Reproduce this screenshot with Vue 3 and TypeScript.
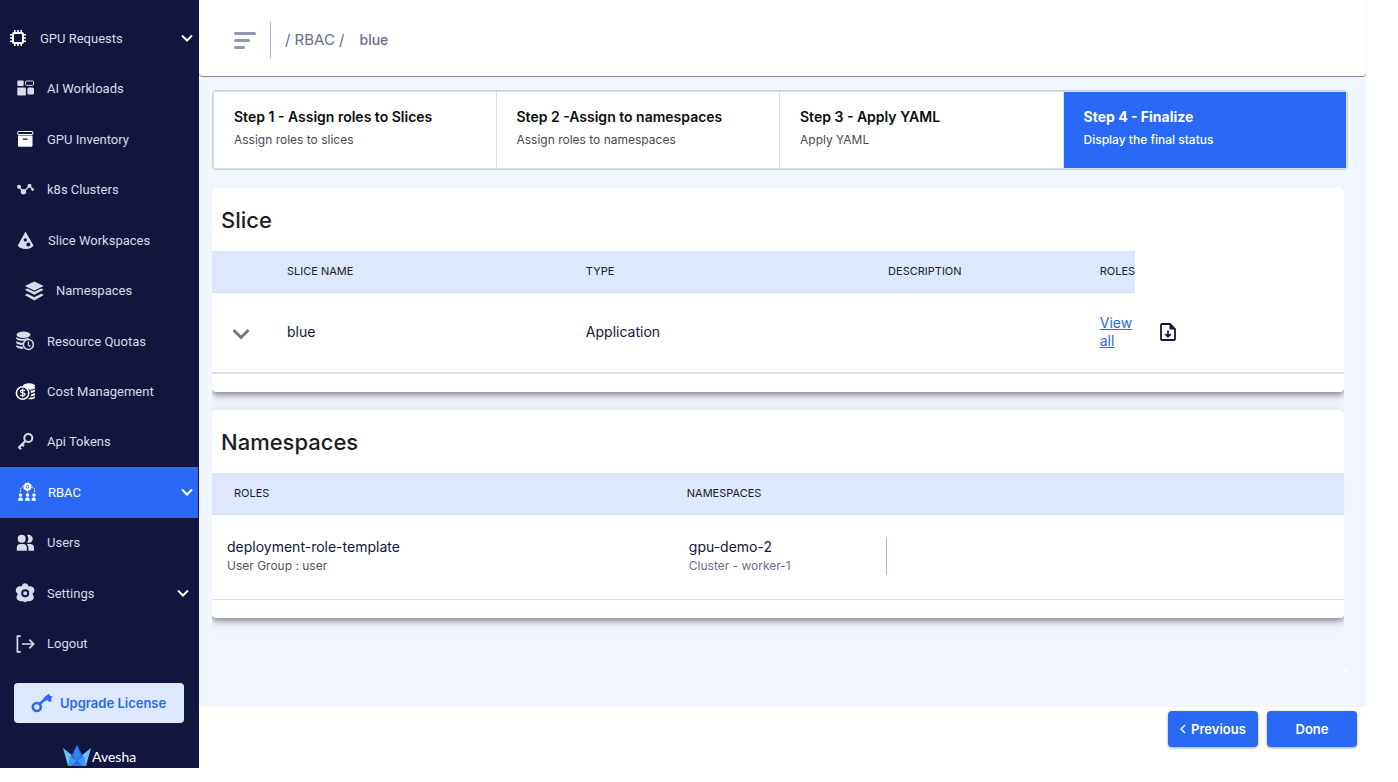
<script setup lang="ts">
import { ref } from 'vue'

interface NavItem {
  label: string
  icon: string
  place: 'root' | 'child' | 'offset' | 'nested'
  expandable?: boolean
}

interface Step {
  title: string
  hint: string
}

const navItems: NavItem[] = [
  { label: 'GPU Requests', icon: 'chip', place: 'root', expandable: true },
  { label: 'AI Workloads', icon: 'workloads', place: 'child' },
  { label: 'GPU Inventory', icon: 'archive', place: 'child' },
  { label: 'k8s Clusters', icon: 'clusters', place: 'child' },
  { label: 'Slice Workspaces', icon: 'slice', place: 'offset' },
  { label: 'Namespaces', icon: 'layers', place: 'nested' },
  { label: 'Resource Quotas', icon: 'quota', place: 'child' },
  { label: 'Cost Management', icon: 'cost', place: 'child' },
  { label: 'Api Tokens', icon: 'key', place: 'child' },
  { label: 'RBAC', icon: 'rbac', place: 'offset', expandable: true },
  { label: 'Users', icon: 'users', place: 'child' },
  { label: 'Settings', icon: 'settings', place: 'child', expandable: true },
  { label: 'Logout', icon: 'logout', place: 'child' },
]

const steps: Step[] = [
  { title: 'Step 1 - Assign roles to Slices', hint: 'Assign roles to slices' },
  { title: 'Step 2 -Assign to namespaces', hint: 'Assign roles to namespaces' },
  { title: 'Step 3 - Apply YAML', hint: 'Apply YAML' },
  { title: 'Step 4 - Finalize', hint: 'Display the final status' },
]

const slices = [{ name: 'blue', type: 'Application', description: '' }]
const roles = [
  { name: 'deployment-role-template', group: 'User Group : user', namespace: 'gpu-demo-2', cluster: 'Cluster - worker-1' },
]

const activeNav = ref('RBAC')
const activeStep = ref(3)
</script>

<template>
  <div class="page">
    <aside class="sidebar">
      <nav class="nav" aria-label="Main">
        <a
          v-for="item in navItems"
          :key="item.label"
          href="#"
          class="nav-item"
          :class="[item.place, { active: item.label === activeNav }]"
          @click.prevent="activeNav = item.label"
        >
          <svg class="nav-icon" viewBox="0 0 20 20" aria-hidden="true">
            <g v-if="item.icon === 'chip'" class="bright">
              <path fill-rule="evenodd" d="M6 4h8a2 2 0 0 1 2 2v8a2 2 0 0 1-2 2H6a2 2 0 0 1-2-2V6a2 2 0 0 1 2-2zm0 2v8h8V6z" />
              <path d="M6 2h1.6v2.4H6zM9.200 2h1.600v2.400H9.200zM12.400 2H14v2.400h-1.600zM6 15.600h1.600V18H6zM9.200 15.600h1.600V18H9.200zM12.400 15.600H14V18h-1.600zM2 6h2.400v1.600H2zM2 9.200h2.400v1.600H2zM2 12.400h2.400V14H2zM15.600 6H18v1.600h-2.400zM15.600 9.200H18v1.600h-2.400zM15.600 12.400H18V14h-2.400z" />
            </g>
            <g v-else-if="item.icon === 'workloads'">
              <rect x="2.300" y="1.500" width="6.400" height="5.500" rx="1" />
              <rect x="10.600" y="2" width="7.900" height="4.400" rx=".8" fill="none" stroke="currentColor" />
              <rect x="2.300" y="8.500" width="8.600" height="8" rx="1" />
              <rect x="12.400" y="8.500" width="6.600" height="7" rx="1.500" />
            </g>
            <g v-else-if="item.icon === 'archive'" class="bright">
              <rect x="2.800" y="2.500" width="15" height="3" rx=".5" fill="none" stroke="currentColor" />
              <path fill-rule="evenodd" d="M3 6.500h14.500v10a1.300 1.300 0 0 1-1.300 1.300H4.300A1.300 1.300 0 0 1 3 16.500zM7.800 9.600v1.200h4.800V9.600z" />
            </g>
            <g v-else-if="item.icon === 'clusters'">
              <path d="M4 7l4.500 5 6-6 3.500 3.500" fill="none" stroke="currentColor" stroke-width="1.300" />
              <circle cx="4" cy="6.800" r="2" />
              <circle cx="8.500" cy="11.800" r="2.700" />
              <circle cx="14.500" cy="5.700" r="2" />
              <circle cx="17.600" cy="9.500" r="1.400" />
            </g>
            <path
              v-else-if="item.icon === 'slice'"
              fill-rule="evenodd"
              d="M9.500 1.500L1.800 15.500c1 2.200 4.300 3.600 7.800 3.600s6.900-1.400 7.900-3.600zM9.300 8.200a1.700 1.700 0 1 1 0 3.400 1.700 1.700 0 0 1 0-3.400zM12.300 12.600a2 2 0 1 1 0 4 2 2 0 0 1 0-4z"
            />
            <g v-else-if="item.icon === 'layers'">
              <path d="M10.300.5L19.800 5l-9.500 4.500L.8 5z" />
              <path d="M.8 8.800l2.600-1.200 6.900 3.200 6.900-3.200 2.600 1.200-9.500 5z" />
              <path d="M.8 14l2.600-1.200 6.900 3.400 6.900-3.400 2.600 1.200-9.500 5.400z" />
            </g>
            <g v-else-if="item.icon === 'quota'">
              <ellipse cx="8.500" cy="3.800" rx="7" ry="3.200" />
              <path d="M1.300 6c2 2 8 2.700 12 .8l1 .7c-2 .4-3.600 1.200-4.600 2.300-3.400.2-7-.5-8.400-1.900zM1.300 10c1.600 1.300 4.300 1.900 7 1.800l-.7 2.200c-2.500 0-5-.6-6.300-1.800zM1.300 14c1.600 1.200 4 1.600 6.200 1.600l1 2.300c-3 .1-6-.5-7.200-1.800z" />
              <circle cx="13.400" cy="13.500" r="5" fill="none" stroke="currentColor" stroke-width="1.500" />
              <path d="M13.400 10.500v3.400l2 1.500" fill="none" stroke="currentColor" stroke-width="1.300" />
            </g>
            <g v-else-if="item.icon === 'cost'" class="bright">
              <ellipse cx="14" cy="3.500" rx="6" ry="2.200" />
              <path d="M8 4.500h12v1.800c-1.400 1.200-3.300 1.500-5.500 1.400C13 5.800 11 5 8 5zM15.300 8.800c2 0 3.700-.4 4.700-1.200v2c-1 .9-2.300 1.300-4 1.400zM16.300 12.200c1.500-.1 2.800-.5 3.700-1.200v2c-1 .9-2.500 1.300-4.300 1.400zM15.300 15.500c2 0 3.700-.4 4.700-1.200v1.700c-1.300 1.200-4.300 1.500-7 1.100z" />
              <circle cx="7.600" cy="11" r="6.200" fill="none" stroke="currentColor" stroke-width="1.600" />
              <path d="M10 9c-.5-1-4.500-1.400-4.500.4 0 2 4.500 1 4.500 3 0 1.800-4.200 1.600-4.700.3M7.700 6.600v8.600" fill="none" stroke="currentColor" stroke-width="1.200" />
            </g>
            <g v-else-if="item.icon === 'key'" fill="none" stroke="currentColor">
              <circle cx="13.300" cy="6" r="4" stroke-width="2" />
              <path d="M10.400 9l-7 7M4 15.200l2 2M7 12.300l2 2" stroke-width="2.200" />
            </g>
            <g v-else-if="item.icon === 'rbac'">
              <path d="M4.500 10V7.500A3 3 0 0 1 7 5M18.500 10V7.500A3 3 0 0 0 16 5M11.500 8v3" fill="none" stroke="currentColor" stroke-dasharray="1.500 1" />
              <circle cx="11.500" cy="4.700" r="2.800" fill="none" stroke="currentColor" stroke-width="2" />
              <circle cx="11.500" cy="4.700" r="3.900" fill="none" stroke="currentColor" stroke-dasharray="1.500 1.500" />
              <circle cx="11.500" cy="4.700" r="1" />
              <circle cx="4.500" cy="13" r="1.700" />
              <circle cx="11.500" cy="13" r="1.700" />
              <circle cx="18" cy="13" r="1.700" />
              <path d="M2 18.700c0-4.500 5-4.500 5 0zM9 18.700c0-4.500 5-4.500 5 0zM15.500 18.700c0-4.500 4.500-4.500 4.500 0z" />
            </g>
            <g v-else-if="item.icon === 'users'">
              <circle cx="6.700" cy="5.800" r="4" />
              <path d="M12 2.200a4 4 0 1 1 0 7.200 5.300 5.300 0 0 0 0-7.200zM1.800 17.800v-3A3.800 3.800 0 0 1 5.600 11H8a3.800 3.800 0 0 1 3.800 3.800v3zM11.600 11h3.600a3.800 3.800 0 0 1 3.800 3.800v3h-5.600v-3c0-1.500-.7-2.800-1.800-3.800z" />
            </g>
            <g v-else-if="item.icon === 'settings'">
              <path
                fill-rule="evenodd"
                d="M6.800 3.500c.4-4.400 6.200-4.400 6.600 0 4.300-1.700 8.200 3 4.800 6.600-.7.700-.7 1-.2 1.800 2.300 3.700-1 7.200-5 6l-1.500.9q-1.400.7-2.800 0l-1.400-.9c-4 1.200-7.400-2.300-5-6 .4-.8.400-1-.3-1.800-3.400-3.600.5-8.300 4.800-6.600zM10.200 6.200a4 4 0 1 0 0 8 4 4 0 0 0 0-8z"
              />
              <circle cx="10.200" cy="10.200" r="2" />
            </g>
            <g v-else fill="none" stroke="currentColor" stroke-width="1.700">
              <path d="M5.800 2.200H2.400v15.600h3.400M7 10h11.500M14.300 5.600l4.400 4.400-4.400 4.400" />
            </g>
          </svg>
          <span class="nav-label">{{ item.label }}</span>
          <svg v-if="item.expandable" class="nav-chevron" :class="{ inset: item.icon === 'settings' }" viewBox="0 0 12 8" aria-hidden="true">
            <path d="M1 1.500l5 5 5-5" fill="none" stroke="currentColor" stroke-width="2" />
          </svg>
        </a>
      </nav>

      <button type="button" class="upgrade">
        <svg viewBox="0 0 22 20" aria-hidden="true">
          <circle cx="5.800" cy="14" r="4" fill="none" stroke="currentColor" stroke-width="2.600" />
          <path d="M8.600 11L17.500 3" fill="none" stroke="currentColor" stroke-width="2.600" />
          <path d="M12.500 5l5.600-4.500L19 3l2.500.6-1.300 2.200.3 2.700-2.800.2-1-1.700-2.200 1z" />
        </svg>
        <span>Upgrade License</span>
      </button>

      <div class="brand">
        <svg viewBox="0 0 28 22" aria-hidden="true">
          <path d="M0 3l10 8L7 21H5z" fill="#6dbdfb" />
          <path d="M28 3l-10 8 3 10h2z" fill="#6dbdfb" />
          <path d="M14 0l7 13-7 3-7-3z" fill="#2563e8" />
          <path d="M14 0l3.500 11L14 15l-3.500-4z" fill="#2e86f2" />
          <path d="M7 11l7 4.500L9 21H5z" fill="#3f95f5" />
          <path d="M21 11l-7 4.500 5 5.500h4z" fill="#3f95f5" />
          <path d="M14 15.500l6 5.500H8z" fill="#2d6be8" />
        </svg>
        <span>Avesha</span>
      </div>
    </aside>

    <div class="content">
      <main class="panel">
        <header class="topbar">
          <button type="button" class="menu" aria-label="Toggle menu">
            <i class="bar"></i><i class="bar mid"></i><i class="bar short"></i>
          </button>
          <div class="crumbs">
            <a href="#">/ RBAC /</a>
            <span class="current">blue</span>
          </div>
        </header>

        <div class="steps">
          <button
            v-for="(step, index) in steps"
            :key="step.title"
            type="button"
            class="step"
            :class="{ active: index === activeStep }"
            @click="activeStep = index"
          >
            <span class="step-title">{{ step.title }}</span>
            <span class="step-hint">{{ step.hint }}</span>
          </button>
        </div>

        <div class="scroller">
          <div class="cards">
            <section class="card">
              <h2>Slice</h2>
              <table class="slice-table">
                <colgroup>
                  <col class="c-toggle" />
                  <col class="c-name" />
                  <col class="c-type" />
                  <col class="c-description" />
                  <col class="c-roles" />
                  <col />
                </colgroup>
                <thead>
                  <tr>
                    <th></th>
                    <th>SLICE NAME</th>
                    <th>TYPE</th>
                    <th>DESCRIPTION</th>
                    <th>ROLES</th>
                  </tr>
                </thead>
                <tbody>
                  <tr v-for="slice in slices" :key="slice.name">
                    <td>
                      <button type="button" class="expand" aria-label="Expand slice">
                        <svg viewBox="0 0 18 12" aria-hidden="true">
                          <path d="M1.500 2l7.500 7.500L16.500 2" fill="none" stroke="currentColor" stroke-width="3" />
                        </svg>
                      </button>
                    </td>
                    <td>{{ slice.name }}</td>
                    <td>{{ slice.type }}</td>
                    <td>{{ slice.description }}</td>
                    <td><a href="#" class="view">View all</a></td>
                    <td>
                      <button type="button" class="download" aria-label="Download">
                        <svg viewBox="0 0 18 20" aria-hidden="true">
                          <path d="M3 2h8l5 5v10a1 1 0 0 1-1 1H3a1 1 0 0 1-1-1V3a1 1 0 0 1 1-1z" fill="none" stroke="currentColor" stroke-width="1.800" />
                          <path d="M10.500 2v5.500H16z" />
                          <path d="M9 8.500v6M6.200 12L9 14.800l2.800-2.800" fill="none" stroke="currentColor" stroke-width="1.700" />
                        </svg>
                      </button>
                    </td>
                  </tr>
                </tbody>
              </table>
            </section>

            <section class="card">
              <h2>Namespaces</h2>
              <table class="role-table">
                <colgroup>
                  <col class="c-role" />
                  <col />
                </colgroup>
                <thead>
                  <tr>
                    <th>ROLES</th>
                    <th>NAMESPACES</th>
                  </tr>
                </thead>
                <tbody>
                  <tr v-for="role in roles" :key="role.name">
                    <td>
                      <div class="name">{{ role.name }}</div>
                      <div class="detail">{{ role.group }}</div>
                    </td>
                    <td>
                      <div class="namespace">
                        <div class="name">{{ role.namespace }}</div>
                        <div class="detail cluster">{{ role.cluster }}</div>
                      </div>
                    </td>
                  </tr>
                </tbody>
              </table>
            </section>
          </div>
        </div>
      </main>

      <footer class="actions">
        <button type="button" class="action">
          <svg viewBox="0 0 6 10" aria-hidden="true">
            <path d="M5 1L1 5l4 4" fill="none" stroke="currentColor" stroke-width="1.400" />
          </svg>
          <span>Previous</span>
        </button>
        <button type="button" class="action">Done</button>
      </footer>
    </div>
  </div>
</template>

<style>
body {
  margin: 0;
  background: #fff;
}
</style>

<style scoped>
.page {
  display: flex;
  align-items: flex-start;
  min-height: 100vh;
  font-family: Inter, 'Liberation Sans', sans-serif;
  font-size: 14px;
  color: #12153d;
}

button {
  font: inherit;
  border: 0;
  margin: 0;
  padding: 0;
  background: none;
  color: inherit;
  cursor: pointer;
}

svg {
  display: block;
  fill: currentColor;
}

.sidebar {
  flex: none;
  display: flex;
  flex-direction: column;
  box-sizing: border-box;
  width: 199px;
  min-height: calc(100vh - 14px);
  padding-top: 13px;
  background: #12153d;
}

.nav {
  flex: 1;
  display: flex;
  flex-direction: column;
  margin-right: 1px;
}

.nav-item {
  flex: 1;
  display: flex;
  align-items: center;
  gap: 12px;
  padding: 0 5px 0 15px;
  min-height: 40px;
  color: #d9daea;
  font-family: Roboto, 'Liberation Sans', sans-serif;
  font-size: 13px;
  text-decoration: none;
}

.nav-item.root {
  padding-left: 8px;
}

.nav-item.offset {
  padding-left: 16px;
}

.nav-item.nested {
  padding-left: 24px;
}

.nav-item.active {
  background: #2969f5;
  color: #fff;
}

.nav-icon {
  flex: none;
  width: 20px;
  height: 20px;
}

.bright {
  color: #fff;
}

.nav-label {
  flex: 1;
  white-space: nowrap;
}

.nav-chevron {
  width: 12px;
  height: 8px;
  color: #fff;
}

.nav-chevron.inset {
  margin-right: 4px;
}

.upgrade {
  display: flex;
  align-items: center;
  gap: 7px;
  height: 40px;
  margin: 14px 15px 0 14px;
  padding-left: 17px;
  border-radius: 4px;
  background: #dde7fe;
  color: #2969f5;
  font-size: 13px;
  font-weight: 600;
  white-space: nowrap;
}

.upgrade svg {
  width: 22px;
  height: 20px;
}

.brand {
  display: flex;
  align-items: center;
  gap: 1px;
  height: 22px;
  margin: 22px 0 0 63px;
  padding-bottom: 1px;
  color: #fff;
  font-family: Lato, sans-serif;
  font-size: 14px;
}

.brand svg {
  width: 28px;
  height: 22px;
}

.content {
  flex: 1;
  display: flex;
  flex-direction: column;
  min-width: 0;
  min-height: 100vh;
  padding-right: 32px;
  box-sizing: border-box;
}

.panel {
  flex: 1;
  display: flex;
  flex-direction: column;
  background: #f2f6fe;
}

.topbar {
  display: flex;
  align-items: center;
  height: 76px;
  padding: 4px 35px 0;
  box-sizing: border-box;
  border-radius: 0 0 4px 4px;
  background: #fff;
  box-shadow: 0 1px 1px rgba(0, 0, 0, 0.45);
}

.menu {
  display: flex;
  flex-direction: column;
  gap: 4px;
  width: 22px;
}

.bar {
  width: 22px;
  height: 3px;
  border-radius: 2px;
  background: #9297b9;
}

.bar.mid {
  width: 16px;
}

.bar.short {
  width: 11px;
}

.crumbs {
  display: flex;
  align-items: center;
  gap: 15px;
  height: 36px;
  margin-left: 14px;
  padding-left: 14px;
  border-left: 1px solid #b4b7d4;
  color: #6a6c8a;
  font-size: 15px;
  line-height: 18px;
}

.crumbs a {
  color: inherit;
  text-decoration: none;
}

.current {
  font-size: 14px;
  font-weight: 500;
}

.steps {
  display: grid;
  grid-template-columns: repeat(4, 1fr);
  margin: 14px 18px 18px 13px;
  border: 1px solid #cdd0d8;
  border-radius: 4px;
  background: #fff;
}

.step {
  display: flex;
  flex-direction: column;
  align-items: flex-start;
  gap: 3px;
  box-sizing: border-box;
  height: 78px;
  padding: 15px 20px 0;
  border: 1px solid #dcdfec;
  border-left-width: 0;
  text-align: left;
  white-space: nowrap;
}

.step:first-child {
  border-left-width: 1px;
}

.step-title {
  color: #0c0c10;
  font-size: 14px;
  font-weight: 600;
  line-height: 20px;
}

.step-hint {
  color: #4a4a52;
  font-size: 12px;
  line-height: 20px;
}

.step.active {
  background: #2969f5;
}

.step.active .step-title {
  color: #fff;
  font-weight: 700;
}

.step.active .step-hint {
  color: #fff;
  font-weight: 500;
}

.scroller {
  position: relative;
  flex: 1;
  display: flex;
  margin: 0 18px 35px 13px;
  padding: 0 4px 4px 0;
}

.scroller::after {
  content: '';
  position: absolute;
  right: 0;
  bottom: 0;
  width: 4px;
  height: 4px;
  background: #fff;
}

.cards {
  flex: 1;
  display: flex;
  flex-direction: column;
  gap: 18px;
  min-width: 0;
  overflow: hidden;
}

.card {
  padding-bottom: 18px;
  border-radius: 4px;
  background: #fff;
  box-shadow: 0 3px 5px rgba(0, 0, 0, 0.34), 0 4px 14px rgba(0, 0, 0, 0.14);
}

h2 {
  margin: 0;
  padding: 2px 9px 0;
  color: #1e1e1e;
  font-size: 22px;
  font-weight: 500;
  line-height: 61px;
}

table {
  width: 100%;
  border-collapse: separate;
  border-spacing: 0;
  table-layout: fixed;
}

th {
  box-sizing: border-box;
  height: 42px;
  padding: 0 0 2px;
  border-bottom: 1px solid #dcdee3;
  background: #dde7fe;
  color: #202024;
  font-size: 11px;
  font-weight: 400;
  text-align: left;
  white-space: nowrap;
}

td {
  box-sizing: border-box;
  padding: 0 0 2px;
  border-bottom: 1px solid #dfdfdf;
  line-height: 18px;
}

.slice-table td {
  height: 81px;
  border-bottom-width: 2px;
}

.c-toggle {
  width: 75px;
}

.c-name {
  width: 26.4%;
}

.c-type {
  width: 26.7%;
}

.c-description {
  width: 18.7%;
}

.c-roles {
  width: 35px;
}

.expand {
  display: block;
  padding: 4px 20px 0;
  color: #777;
}

.expand svg {
  width: 18px;
  height: 12px;
}

.view {
  display: block;
  color: #2969f5;
}

.download {
  display: block;
  margin-left: 24px;
}

.download svg {
  width: 18px;
  height: 20px;
}

.c-role {
  width: 40%;
}

.role-table th {
  padding-left: 22px;
}

.role-table td {
  height: 85px;
  padding-left: 15px;
}

.role-table td:last-child {
  padding-left: 24px;
}

.namespace {
  width: 197px;
  border-right: 1px solid #b4b7d4;
}

.name {
  font-size: 14px;
  line-height: 18px;
}

.detail {
  color: #55555c;
  font-size: 12px;
  line-height: 19px;
}

.detail.cluster {
  color: #6a6c8a;
}

.actions {
  display: flex;
  justify-content: flex-end;
  gap: 9px;
  padding: 4px 9px 35px;
}

.action {
  display: flex;
  align-items: center;
  justify-content: center;
  gap: 5px;
  width: 90px;
  height: 36px;
  border-radius: 4px;
  background: #2969f5;
  color: #fff;
  font-size: 13px;
  font-weight: 600;
  box-shadow: 0 1px 3px rgba(0, 0, 0, 0.35);
}

.action svg {
  width: 6px;
  height: 10px;
}
</style>
